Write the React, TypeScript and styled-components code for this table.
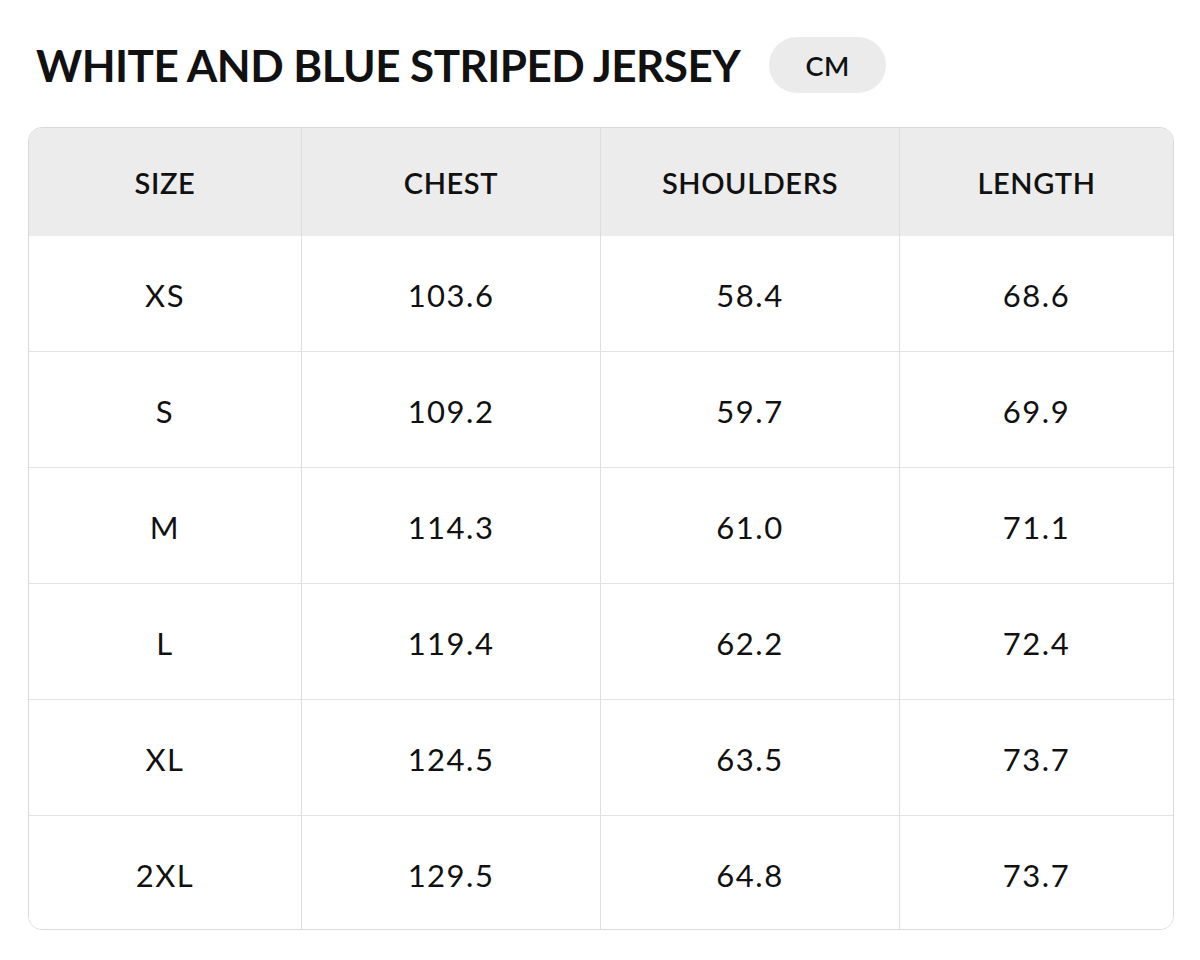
import styled, { createGlobalStyle } from 'styled-components';

const GlobalStyle = createGlobalStyle`
  html, body {
    margin: 0;
    padding: 0;
    background: #ffffff;
    font-family: Lato, "Open Sans", sans-serif;
    color: #111111;
  }
`;

const Page = styled.div`
  width: 1200px;
  height: 960px;
  box-sizing: border-box;
  padding: 37px 26px 0 28px;
`;

const TitleRow = styled.div`
  display: flex;
  align-items: center;
  gap: 29px;
  height: 56px;
  padding-left: 8px;
  margin-bottom: 34px;
`;

const Title = styled.h1`
  margin: 0;
  font-size: 44px;
  font-weight: 700;
  letter-spacing: -0.55px;
  line-height: 1;
`;

const UnitPill = styled.div`
  width: 117px;
  height: 56px;
  border-radius: 28px;
  background: #ebebeb;
  display: flex;
  align-items: center;
  justify-content: center;
  font-size: 27px;
  font-weight: 600;
  letter-spacing: 0.5px;
`;

const Table = styled.div`
  display: grid;
  grid-template-columns: 273px 299px 299px 1fr;
  grid-template-rows: 108px repeat(6, 116px);
  border: 1.5px solid #d9d9d9;
  border-radius: 14px;
  overflow: hidden;
  height: 803px;
  box-sizing: border-box;
`;

const Cell = styled.div<{ head?: boolean; lastCol?: boolean; lastRow?: boolean }>`
  display: flex;
  align-items: center;
  justify-content: center;
  background: ${(p) => (p.head ? '#ececec' : '#ffffff')};
  border-right: ${(p) => (p.lastCol ? 'none' : '1.5px solid #dedede')};
  border-bottom: ${(p) => (p.lastRow || p.head ? 'none' : '1.5px solid #e2e2e2')};
  font-size: ${(p) => (p.head ? '29px' : '31px')};
  font-weight: ${(p) => (p.head ? 600 : 400)};
  letter-spacing: ${(p) => (p.head ? '0.6px' : '1.5px')};
  padding-top: ${(p) => (p.head ? '0' : '2px')};
`;

const headers = ['SIZE', 'CHEST', 'SHOULDERS', 'LENGTH'];
const rows = [
  ['XS', '103.6', '58.4', '68.6'],
  ['S', '109.2', '59.7', '69.9'],
  ['M', '114.3', '61.0', '71.1'],
  ['L', '119.4', '62.2', '72.4'],
  ['XL', '124.5', '63.5', '73.7'],
  ['2XL', '129.5', '64.8', '73.7'],
];

export default function App() {
  return (
    <>
      <GlobalStyle />
      <Page>
        <TitleRow>
          <Title>WHITE AND BLUE STRIPED JERSEY</Title>
          <UnitPill>CM</UnitPill>
        </TitleRow>
        <Table>
          {headers.map((h, i) => (
            <Cell key={h} head lastCol={i === headers.length - 1}>
              {h}
            </Cell>
          ))}
          {rows.map((r, ri) =>
            r.map((v, ci) => (
              <Cell
                key={`${ri}-${ci}`}
                lastCol={ci === r.length - 1}
                lastRow={ri === rows.length - 1}
              >
                {v}
              </Cell>
            ))
          )}
        </Table>
      </Page>
    </>
  );
}
